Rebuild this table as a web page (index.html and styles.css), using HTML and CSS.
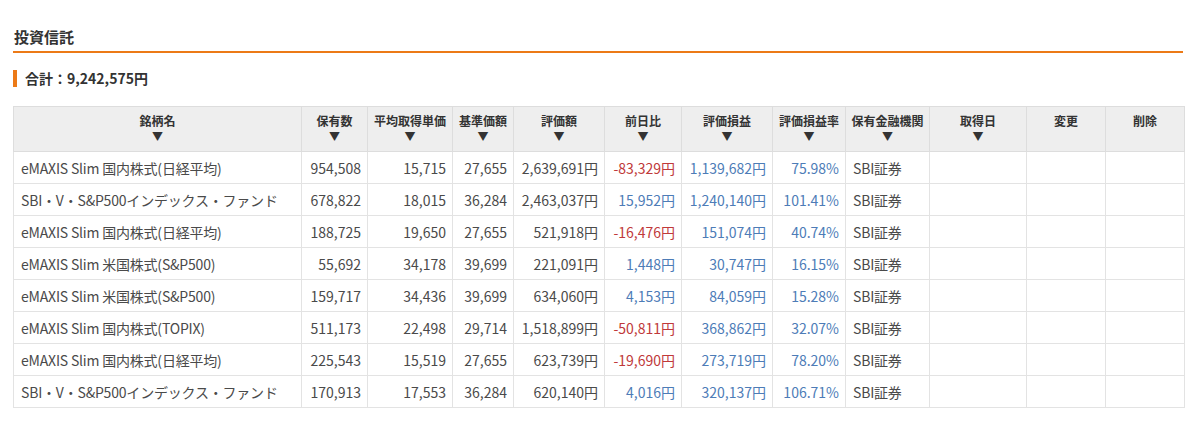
FILE: index.html
```html
<!DOCTYPE html>
<html lang="ja">
<head>
<meta charset="utf-8">
<link rel="stylesheet" href="styles.css">
</head>
<body>
<div class="page">
  <h2 class="title">投資信託</h2>
  <div class="total">合計：9,242,575円</div>
  <table class="funds">
    <colgroup>
      <col style="width:288px"><col style="width:66px"><col style="width:85px"><col style="width:61px"><col style="width:91px"><col style="width:77px"><col style="width:91px"><col style="width:73px"><col style="width:84px"><col style="width:97px"><col style="width:79px"><col style="width:79px">
    </colgroup>
    <thead>
      <tr>
        <th>銘柄名<span class="arr">▼</span></th>
        <th>保有数<span class="arr">▼</span></th>
        <th>平均取得単価<span class="arr">▼</span></th>
        <th>基準価額<span class="arr">▼</span></th>
        <th>評価額<span class="arr">▼</span></th>
        <th>前日比<span class="arr">▼</span></th>
        <th>評価損益<span class="arr">▼</span></th>
        <th>評価損益率<span class="arr">▼</span></th>
        <th>保有金融機関<span class="arr">▼</span></th>
        <th>取得日<span class="arr">▼</span></th>
        <th>変更</th>
        <th>削除</th>
      </tr>
    </thead>
    <tbody>
      <tr><td class="l">eMAXIS Slim 国内株式(日経平均)</td><td>954,508</td><td>15,715</td><td>27,655</td><td>2,639,691円</td><td class="neg">-83,329円</td><td class="pos">1,139,682円</td><td class="pos">75.98%</td><td class="l">SBI証券</td><td></td><td></td><td></td></tr>
      <tr><td class="l">SBI・V・S&amp;P500インデックス・ファンド</td><td>678,822</td><td>18,015</td><td>36,284</td><td>2,463,037円</td><td class="pos">15,952円</td><td class="pos">1,240,140円</td><td class="pos">101.41%</td><td class="l">SBI証券</td><td></td><td></td><td></td></tr>
      <tr><td class="l">eMAXIS Slim 国内株式(日経平均)</td><td>188,725</td><td>19,650</td><td>27,655</td><td>521,918円</td><td class="neg">-16,476円</td><td class="pos">151,074円</td><td class="pos">40.74%</td><td class="l">SBI証券</td><td></td><td></td><td></td></tr>
      <tr><td class="l">eMAXIS Slim 米国株式(S&amp;P500)</td><td>55,692</td><td>34,178</td><td>39,699</td><td>221,091円</td><td class="pos">1,448円</td><td class="pos">30,747円</td><td class="pos">16.15%</td><td class="l">SBI証券</td><td></td><td></td><td></td></tr>
      <tr><td class="l">eMAXIS Slim 米国株式(S&amp;P500)</td><td>159,717</td><td>34,436</td><td>39,699</td><td>634,060円</td><td class="pos">4,153円</td><td class="pos">84,059円</td><td class="pos">15.28%</td><td class="l">SBI証券</td><td></td><td></td><td></td></tr>
      <tr><td class="l">eMAXIS Slim 国内株式(TOPIX)</td><td>511,173</td><td>22,498</td><td>29,714</td><td>1,518,899円</td><td class="neg">-50,811円</td><td class="pos">368,862円</td><td class="pos">32.07%</td><td class="l">SBI証券</td><td></td><td></td><td></td></tr>
      <tr><td class="l">eMAXIS Slim 国内株式(日経平均)</td><td>225,543</td><td>15,519</td><td>27,655</td><td>623,739円</td><td class="neg">-19,690円</td><td class="pos">273,719円</td><td class="pos">78.20%</td><td class="l">SBI証券</td><td></td><td></td><td></td></tr>
      <tr><td class="l">SBI・V・S&amp;P500インデックス・ファンド</td><td>170,913</td><td>17,553</td><td>36,284</td><td>620,140円</td><td class="pos">4,016円</td><td class="pos">320,137円</td><td class="pos">106.71%</td><td class="l">SBI証券</td><td></td><td></td><td></td></tr>
    </tbody>
  </table>
</div>
</body>
</html>
```

FILE: styles.css
```css
* { box-sizing: border-box; }
html, body { margin: 0; padding: 0; background: #fff; }
body {
  font-family: "Noto Sans CJK JP", "Noto Sans", sans-serif;
  color: #444;
}
.page {
  width: 1183px;
  padding: 26px 0 0 13px;
}
.title {
  margin: 0;
  font-size: 15px;
  font-weight: bold;
  color: #333;
  line-height: 22px;
  padding: 0 0 0 1px;
  height: 27px;
  border-bottom: 2px solid #ec7a17;
}
.total {
  margin-top: 17px;
  border-left: 4px solid #ec7a17;
  padding-left: 8px;
  font-size: 14px;
  font-weight: bold;
  color: #333;
  line-height: 17px;
  height: 17px;
}
.funds {
  margin-top: 19px;
  width: 1170px;
  table-layout: fixed;
  border-collapse: collapse;
  border: 1px solid #ddd;
  font-size: 14px;
}
.funds th {
  background: #eeeeee;
  border: 1px solid #ddd;
  font-size: 12px;
  font-weight: bold;
  color: #333;
  height: 45px;
  padding: 6px 0 0;
  vertical-align: top;
  text-align: center;
  line-height: 16px;
  white-space: nowrap;
}
.funds .arr {
  display: block;
  font-size: 11px;
  line-height: 12px;
  margin-top: 1px;
}
.funds td {
  border: 1px solid #e3e3e3;
  height: 32px;
  padding: 0 6px;
  text-align: right;
  line-height: 20px;
  white-space: nowrap;
  color: #4a4a4a;
}
.funds td.l { text-align: left; padding-left: 7px; letter-spacing: -0.2px; }
.funds td.neg { color: #c0393a; }
.funds td.pos { color: #4d7cb7; }
```
